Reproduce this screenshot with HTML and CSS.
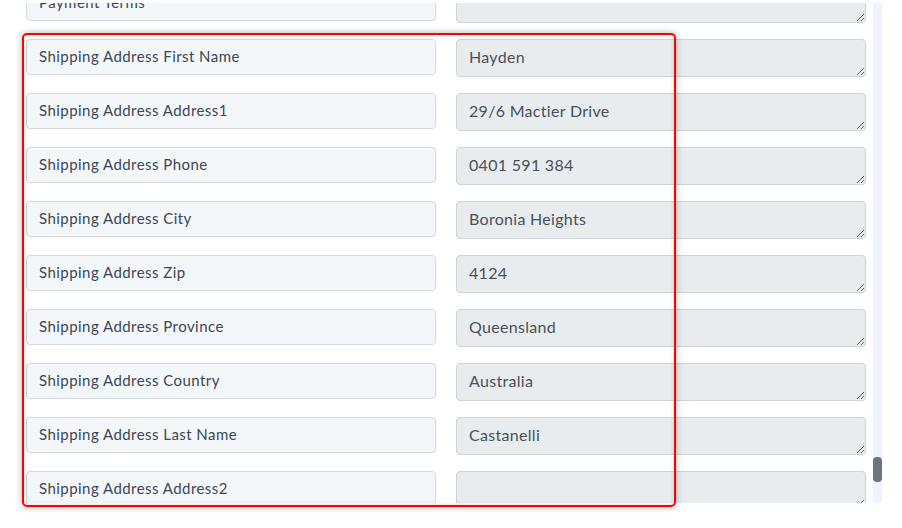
FILE: index.html
```html
<!DOCTYPE html>
<html lang="en">

<head>
    <meta charset="UTF-8">
    <meta name="viewport" content="width=device-width, initial-scale=1.0">
    <title>Field Mapping</title>
    <link rel="stylesheet" href="styles.css">
</head>

<body>
    <div class="viewport">
        <div class="form">
            <div class="form-inner">
                <div class="row">
                    <div class="label">Payment Terms</div>
                    <textarea class="value" readonly></textarea>
                </div>
                <div class="row">
                    <div class="label">Shipping Address First Name</div>
                    <textarea class="value" readonly>Hayden</textarea>
                </div>
                <div class="row">
                    <div class="label">Shipping Address Address1</div>
                    <textarea class="value" readonly>29/6 Mactier Drive</textarea>
                </div>
                <div class="row">
                    <div class="label">Shipping Address Phone</div>
                    <textarea class="value" readonly>0401 591 384</textarea>
                </div>
                <div class="row">
                    <div class="label">Shipping Address City</div>
                    <textarea class="value" readonly>Boronia Heights</textarea>
                </div>
                <div class="row">
                    <div class="label">Shipping Address Zip</div>
                    <textarea class="value" readonly>4124</textarea>
                </div>
                <div class="row">
                    <div class="label">Shipping Address Province</div>
                    <textarea class="value" readonly>Queensland</textarea>
                </div>
                <div class="row">
                    <div class="label">Shipping Address Country</div>
                    <textarea class="value" readonly>Australia</textarea>
                </div>
                <div class="row">
                    <div class="label">Shipping Address Last Name</div>
                    <textarea class="value" readonly>Castanelli</textarea>
                </div>
                <div class="row">
                    <div class="label">Shipping Address Address2</div>
                    <textarea class="value" readonly></textarea>
                </div>
            </div>
        </div>
        <div class="track">
            <div class="thumb"></div>
        </div>
    </div>

    <!-- highlight around the shipping fields -->
    <div class="highlight"></div>
</body>

</html>
```

FILE: styles.css
```css
body {
    margin: 0;
    background: #fff;
    font-family: Lato, 'Open Sans', Arial, sans-serif;
    color: #3b4656;
}

.viewport {
    display: flex;
    width: 882px;
    height: 500px;
    margin-top: 3px;
}

.form {
    flex: 1;
    overflow: hidden;
}

.form-inner {
    margin-top: -18px;
    padding-left: 26px;
}

.row {
    display: flex;
    gap: 20px;
    align-items: flex-start;
    margin-bottom: 16px;
}

.label {
    box-sizing: border-box;
    width: 410px;
    height: 36px;
    padding: 0 12px 2px;
    line-height: 32px;
    font-size: 15px;
    letter-spacing: 0.45px;
    background-color: #f4f7fa;
    border: 1px solid #d3d9e0;
    border-radius: 4px;
    white-space: nowrap;
}

.value {
    box-sizing: border-box;
    display: block;
    width: 410px;
    height: 38px;
    margin: 0;
    padding: 5px 12px 7px;
    font-family: Lato, 'Open Sans', Arial, sans-serif;
    font-size: 16px;
    line-height: 24px;
    letter-spacing: 0.3px;
    color: #495057;
    background-color: #e9ecef;
    border: 1px solid #ced4da;
    border-radius: 4px;
    overflow: hidden;
    resize: vertical;
    outline: none;
}

.track {
    width: 9px;
    padding-top: 454px;
    background-color: #eef5ff;
}

.thumb {
    height: 25px;
    background-color: #6c757d;
    border-radius: 4px;
}

.highlight {
    position: absolute;
    left: 22px;
    top: 33px;
    width: 650px;
    height: 470px;
    border: 2px solid #f00;
    border-radius: 5px;
    box-shadow: 0 0 7px rgba(0, 0, 0, 0.3), inset 0 0 5px rgba(0, 0, 0, 0.15);
    pointer-events: none;
}
```
